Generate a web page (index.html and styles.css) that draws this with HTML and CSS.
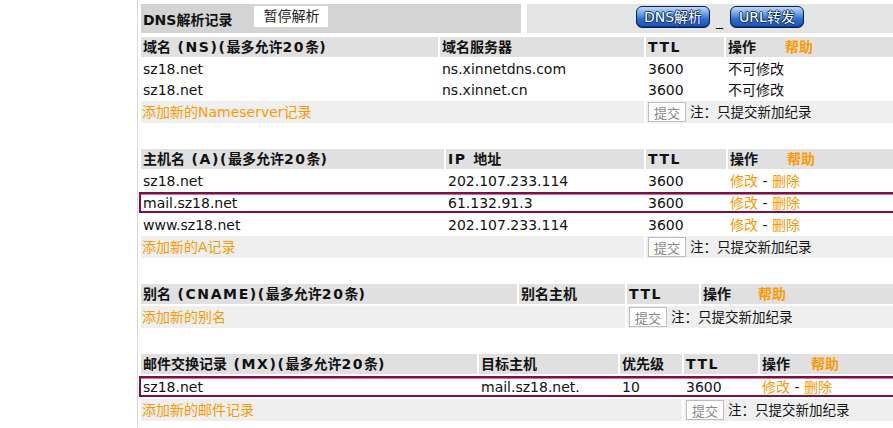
FILE: index.html
```html
<!DOCTYPE html>
<html>
<head>
  <title>DNS解析记录</title>
  <link rel="stylesheet" href="styles.css">
</head>
<body>
  <div class="page">
    <div class="topbar">
      <div class="top-left">
        <b>DNS解析记录</b>
        <span class="pause-box">暂停解析</span>
      </div>
      <div class="top-right">
        <a href="#" class="blue-btn">DNS解析</a>
        <span class="sep">_</span>
        <a href="#" class="blue-btn">URL转发</a>
      </div>
    </div>

    <!-- NS records -->
    <div class="section ns">
      <div class="row head">
        <div>域名<span class="en"> (NS)(</span>最多允许<span class="en">20</span>条<span class="en">)</span></div>
        <div>域名服务器</div>
        <div class="en">TTL</div>
        <div>操作<span class="help">帮助</span></div>
      </div>
      <div class="row">
        <div>sz18.net</div>
        <div>ns.xinnetdns.com</div>
        <div>3600</div>
        <div>不可修改</div>
      </div>
      <div class="row">
        <div>sz18.net</div>
        <div>ns.xinnet.cn</div>
        <div>3600</div>
        <div>不可修改</div>
      </div>
      <div class="row add">
        <div class="span-2"><a href="#">添加新的Nameserver记录</a></div>
        <div class="span-rest"><button class="submit">提交</button><span class="note">注：只提交新加纪录</span></div>
      </div>
    </div>

    <!-- A records -->
    <div class="section arec">
      <div class="row head">
        <div>主机名<span class="en"> (A)(</span>最多允许<span class="en">20</span>条<span class="en">)</span></div>
        <div><span class="en">IP </span>地址</div>
        <div class="en">TTL</div>
        <div>操作<span class="help">帮助</span></div>
      </div>
      <div class="row">
        <div>sz18.net</div>
        <div>202.107.233.114</div>
        <div>3600</div>
        <div><a href="#">修改</a> - <a href="#">删除</a></div>
      </div>
      <div class="row marked">
        <div>mail.sz18.net</div>
        <div>61.132.91.3</div>
        <div>3600</div>
        <div><a href="#">修改</a> - <a href="#">删除</a></div>
      </div>
      <div class="row">
        <div>www.sz18.net</div>
        <div>202.107.233.114</div>
        <div>3600</div>
        <div><a href="#">修改</a> - <a href="#">删除</a></div>
      </div>
      <div class="row add">
        <div class="span-2"><a href="#">添加新的A记录</a></div>
        <div class="span-rest"><button class="submit">提交</button><span class="note">注：只提交新加纪录</span></div>
      </div>
    </div>

    <!-- CNAME records -->
    <div class="section cname">
      <div class="row head">
        <div>别名<span class="en"> (CNAME)(</span>最多允许<span class="en">20</span>条<span class="en">)</span></div>
        <div>别名主机</div>
        <div class="en">TTL</div>
        <div>操作<span class="help">帮助</span></div>
      </div>
      <div class="row add">
        <div class="span-2"><a href="#">添加新的别名</a></div>
        <div class="span-rest"><button class="submit">提交</button><span class="note">注：只提交新加纪录</span></div>
      </div>
    </div>

    <!-- MX records -->
    <div class="section mx">
      <div class="row head">
        <div>邮件交换记录<span class="en"> (MX)(</span>最多允许<span class="en">20</span>条<span class="en">)</span></div>
        <div>目标主机</div>
        <div>优先级</div>
        <div class="en">TTL</div>
        <div>操作<span class="help">帮助</span></div>
      </div>
      <div class="row marked">
        <div>sz18.net</div>
        <div>mail.sz18.net.</div>
        <div>10</div>
        <div>3600</div>
        <div><a href="#">修改</a> - <a href="#">删除</a></div>
      </div>
      <div class="row add">
        <div class="span-3"><a href="#">添加新的邮件记录</a></div>
        <div class="span-rest"><button class="submit">提交</button><span class="note">注：只提交新加纪录</span></div>
      </div>
    </div>
  </div>
</body>
</html>
```

FILE: styles.css
```css
/* Global styles */
html, body {
  margin: 0;
  padding: 0;
  overflow: hidden;
}

body {
  font-family: "DejaVu Sans", "Noto Sans CJK SC", sans-serif;
  font-size: 14px;
  line-height: 16px;
  color: #111;
  background-color: #fff;
}

a {
  color: #ff9900;
  text-decoration: none;
}

/* Page frame */
.page {
  margin-left: 137px;
  border-left: 1px solid #dcdcdc;
  padding: 4px 0 20px 3px;
  width: 780px;
  min-height: 430px;
}

/* Top bar */
.topbar {
  display: flex;
  gap: 6px;
  height: 29px;
  margin-bottom: 4px;
}

.top-left {
  width: 380px;
  background-color: #d4d4d4;
  display: flex;
  align-items: center;
  padding-left: 2px;
  box-sizing: border-box;
}

.top-left b {
  margin-right: 22px;
  margin-top: 2px;
}

.pause-box {
  display: inline-block;
  width: 74px;
  height: 21px;
  line-height: 20px;
  background-color: #fff;
  text-align: center;
  color: #222;
  margin-top: -4px;
}

.top-right {
  flex: 1;
  background-color: #e4e4e4;
  display: flex;
  align-items: center;
  padding-left: 109px;
}

.blue-btn {
  display: inline-block;
  width: 74px;
  height: 22px;
  line-height: 20px;
  box-sizing: border-box;
  text-align: center;
  color: #fff;
  border: 1px solid #0a1d42;
  border-radius: 6px;
  background: linear-gradient(#c4dcf8, #5d96e4 40%, #2f6cd0 60%, #1a52b4);
  box-shadow: inset 0 -1px 0 #0f3a88;
  text-shadow: 1px 0 0 #10337a, -1px 0 0 #10337a, 0 1px 0 #10337a, 0 -1px 0 #10337a;
  margin-top: -4px;
}

.sep {
  margin: 4px 7px 0 6px;
  color: #000;
}

/* Record sections */
.section {
  display: grid;
  row-gap: 2px;
  margin-bottom: 26px;
}

.ns { --cols: 297px 204px 78px 1fr; }
.arec { --cols: 303px 198px 80px 1fr; }
.cname { --cols: 376px 106px 72px 1fr; }
.mx { --cols: 336px 139px 62px 74px 1fr; }

.row {
  display: grid;
  grid-template-columns: var(--cols);
  column-gap: 2px;
  height: 19px;
  align-items: center;
}

.row > div {
  padding-left: 2px;
  white-space: nowrap;
}

.row.head {
  height: 20px;
  align-items: stretch;
}

.row.head > div {
  background-color: #e0e0e0;
  font-weight: bold;
  display: flex;
  align-items: center;
  white-space: pre;
}

.en {
  letter-spacing: 1.6px;
}

.help {
  color: #ff9900;
  margin-left: 29px;
}

.cname .help { margin-left: 27px; }
.mx .help { margin-left: 21px; }

.row.marked {
  height: 21px;
  border: 2px solid #7e0f44;
  box-shadow: inset 0 1px 0 #c27a9c;
  margin-left: -2px;
  box-sizing: border-box;
}

.row.add {
  height: 22px;
  align-items: stretch;
}

.row.add > div {
  background-color: #efefef;
  display: flex;
  align-items: center;
  padding-left: 1px;
}

.span-2 { grid-column: span 2; }
.span-3 { grid-column: span 3; }
.span-rest { grid-column: span 2; }

.submit {
  width: 38px;
  height: 20px;
  padding: 0;
  font-family: "Noto Sans CJK SC", sans-serif;
  font-size: 13px;
  color: #888;
  background-color: #fff;
  border: 1px solid #bdbdbd;
  margin-left: 1px;
}

.note {
  margin-left: 4px;
  font-size: 13.5px;
}
```
